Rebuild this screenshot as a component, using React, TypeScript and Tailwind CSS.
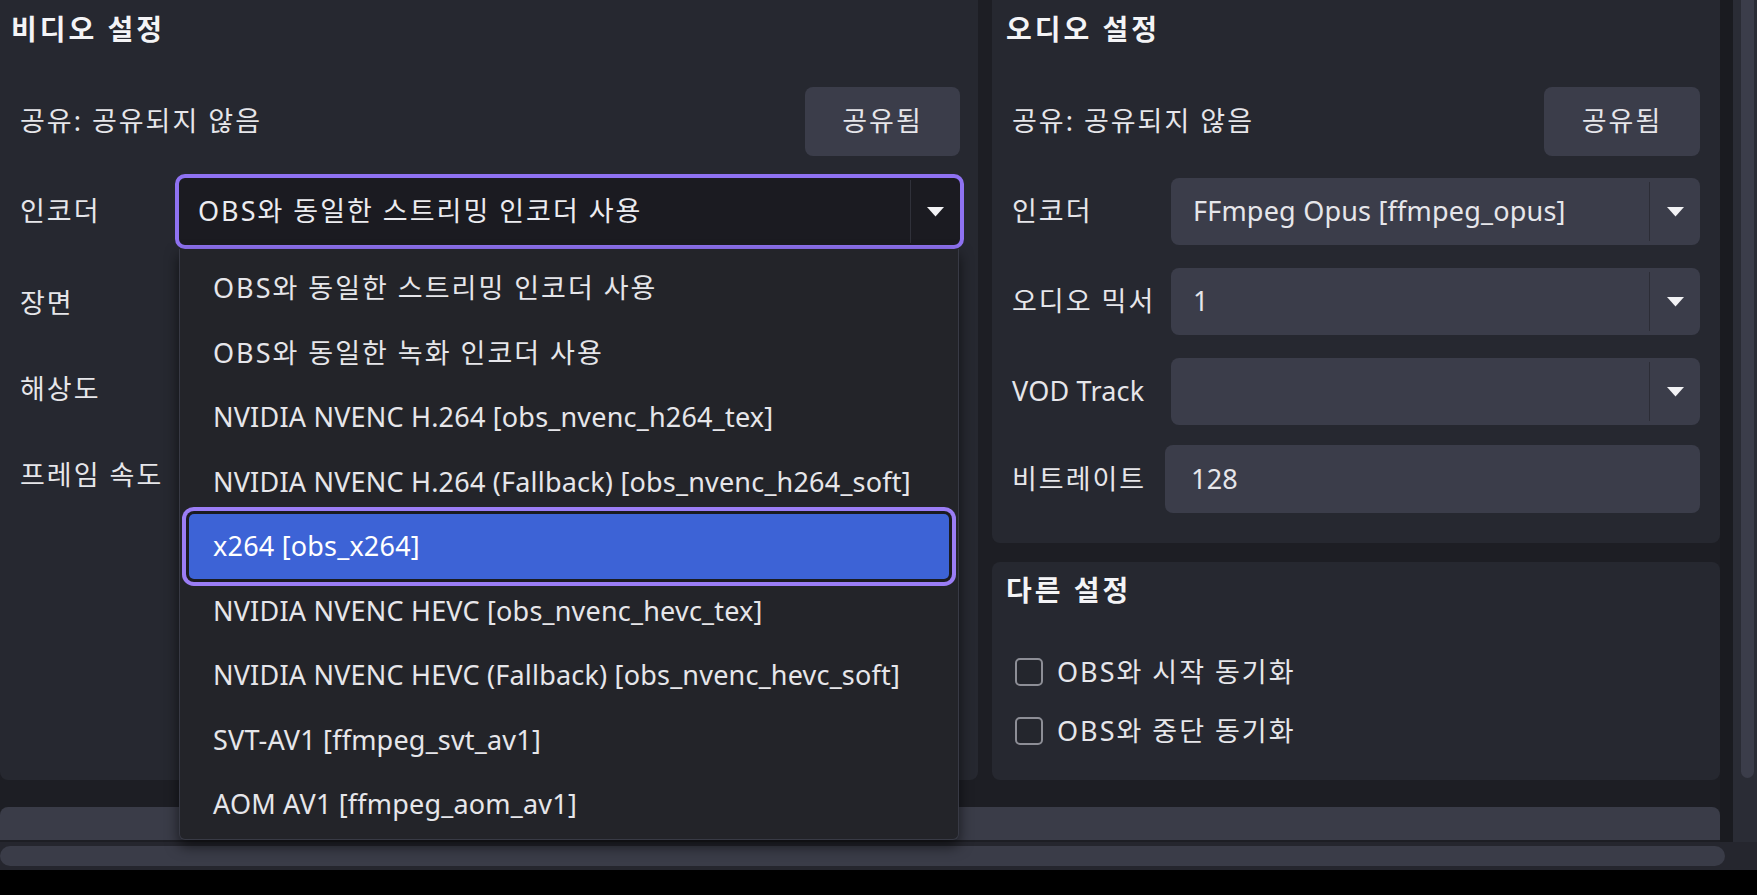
import React from "react";

const FONT = '"Noto Sans", "Noto Sans CJK KR", sans-serif';

function Arrow() {
  return (
    <svg width="17" height="10" viewBox="0 0 17 10">
      <polygon points="0,0 17,0 8.5,9.5" fill="#f2f2f5" />
    </svg>
  );
}

function Combo({ value, className = "" }: { value: string; className?: string }) {
  return (
    <div className={"flex h-[67px] items-stretch rounded-[8px] bg-[#3b3d4a] " + className}>
      <div className="flex flex-1 items-center pl-[22px] text-[27px] tracking-[0.2px] text-[#e6e6ea]">{value}</div>
      <div className="my-[4px] w-px bg-[#2c2d36]" />
      <div className="flex w-[50px] items-center justify-center">
        <Arrow />
      </div>
    </div>
  );
}

const items = [
  "OBS와 동일한 스트리밍 인코더 사용",
  "OBS와 동일한 녹화 인코더 사용",
  "NVIDIA NVENC H.264 [obs_nvenc_h264_tex]",
  "NVIDIA NVENC H.264 (Fallback) [obs_nvenc_h264_soft]",
  "x264 [obs_x264]",
  "NVIDIA NVENC HEVC [obs_nvenc_hevc_tex]",
  "NVIDIA NVENC HEVC (Fallback) [obs_nvenc_hevc_soft]",
  "SVT-AV1 [ffmpeg_svt_av1]",
  "AOM AV1 [ffmpeg_aom_av1]",
];

const KO = "text-[27px] tracking-[2px]";
const LAT = "text-[27px] tracking-[0.2px]";
const TITLE = "text-[28px] font-bold tracking-[3px] text-[#f4f4f6]";

function Checkbox({ label }: { label: string }) {
  return (
    <div className="flex h-[40px] items-center">
      <div className="h-[28px] w-[28px] rounded-[5px] border-2 border-[#8d8e96] bg-[#24262d]" />
      <span className={"ml-[14px] text-[#e6e6ea] " + KO}>{label}</span>
    </div>
  );
}

export default function App() {
  return (
    <div
      className="relative h-[895px] w-[1757px] overflow-hidden bg-black text-[#e6e6ea]"
      style={{ fontFamily: FONT }}
    >
      <div className="flex h-[870px] flex-col bg-[#1d1e24]">
        <div className="flex h-[842px]">
          <div className="flex w-[1720px] flex-col">
            <div className="flex h-[780px] gap-[14px]">
              {/* Video settings */}
              <div className="w-[978px] rounded-b-[8px] bg-[#262830]">
                <div className={"flex h-[58px] items-center pl-[11px] " + TITLE}>비디오 설정</div>
                <div className="mt-[29px] flex h-[69px] items-center justify-between pl-[20px] pr-[18px]">
                  <span className={KO}>공유: 공유되지 않음</span>
                  <div className={"flex h-[69px] w-[155px] items-center justify-center rounded-[8px] bg-[#3b3d4a] " + KO}>
                    공유됨
                  </div>
                </div>
                <div className="mt-[18px] flex h-[75px] items-center">
                  <span className={"w-[175px] pl-[20px] " + KO}>인코더</span>
                  <div className="flex h-[75px] w-[789px] items-stretch rounded-[10px] border-[4px] border-[#8f72f2] bg-[#1b1b21]">
                    <div className={"flex flex-1 items-center pl-[19px] text-[#ececf0] " + KO}>
                      OBS와 동일한 스트리밍 인코더 사용
                    </div>
                    <div className="my-[2px] w-px bg-[#30313a]" />
                    <div className="flex w-[49px] items-center justify-center">
                      <Arrow />
                    </div>
                  </div>
                </div>
                <div className={"mt-[21px] flex h-[67px] items-center pl-[20px] " + KO}>장면</div>
                <div className={"mt-[19px] flex h-[67px] items-center pl-[20px] " + KO}>해상도</div>
                <div className={"mt-[19px] flex h-[67px] items-center pl-[20px] " + KO}>프레임 속도</div>
              </div>

              {/* Right column */}
              <div className="flex flex-1 flex-col gap-[19px]">
                <div className="h-[543px] rounded-b-[8px] bg-[#262830]">
                  <div className={"flex h-[58px] items-center pl-[14px] " + TITLE}>오디오 설정</div>
                  <div className="mt-[29px] flex h-[69px] items-center justify-between pl-[20px] pr-[20px]">
                    <span className={KO}>공유: 공유되지 않음</span>
                    <div className={"flex h-[69px] w-[156px] items-center justify-center rounded-[8px] bg-[#3b3d4a] " + KO}>
                      공유됨
                    </div>
                  </div>
                  <div className="mt-[22px] grid grid-cols-[153px_1fr] items-center gap-y-[23px] pl-[20px] pr-[20px]">
                    <span className={KO}>인코더</span>
                    <Combo value="FFmpeg Opus [ffmpeg_opus]" className="ml-[6px]" />
                    <span className={"whitespace-nowrap " + KO}>오디오 믹서</span>
                    <Combo value="1" className="ml-[6px]" />
                    <span className={LAT}>VOD Track</span>
                    <Combo value="" className="ml-[6px]" />
                    <span className={"-mt-[3px] whitespace-nowrap " + KO}>비트레이트</span>
                    <div className={"-mt-[3px] flex h-[68px] items-center rounded-[8px] bg-[#3b3d4a] pl-[26px] " + LAT}>
                      128
                    </div>
                  </div>
                </div>
                <div className="flex-1 rounded-[8px] bg-[#262830]">
                  <div className={"flex h-[56px] items-center pl-[14px] " + TITLE}>다른 설정</div>
                  <div className="mt-[34px] flex flex-col gap-[19px] pl-[23px]">
                    <Checkbox label="OBS와 시작 동기화" />
                    <Checkbox label="OBS와 중단 동기화" />
                  </div>
                </div>
              </div>
            </div>
            <div className="mt-[27px] h-[33px] rounded-t-[8px] bg-[#3a3c48]" />
          </div>
          <div className="w-[13px] bg-[#1a1b20]" />
          <div className="w-[24px] bg-[#2a2c35] pl-[8px] pr-[3px]">
            <div className="h-[778px] rounded-b-full bg-[#3b3d4a]" />
          </div>
        </div>
        <div className="flex h-[28px] items-center bg-[#25262e]">
          <div className="h-[20px] w-[1725px] rounded-full bg-[#3a3c48]" />
        </div>
      </div>

      {/* Dropdown popup */}
      <div className="absolute left-[179px] top-[249px] h-[591px] w-[780px] rounded-b-[6px] border border-t-0 border-[#383a45] bg-[#232429] pt-[7px] shadow-[0_6px_14px_rgba(0,0,0,0.6)]">
        {items.map((it, i) => {
          const sel = i === 4;
          const ko = /[가-힣]/.test(it);
          const txt = ko ? KO : LAT;
          return (
            <div key={i} className="flex h-[64.5px] items-center px-[9px]">
              {sel ? (
                <div
                  className={
                    "flex h-[65px] w-full items-center rounded-[5px] bg-[#3d63d6] pl-[24px] text-white shadow-[0_0_0_3px_#1b1b21,0_0_0_7px_#9b7df5] " +
                    txt
                  }
                >
                  {it}
                </div>
              ) : (
                <div className={"pl-[24px] text-[#e6e6ea] " + txt}>{it}</div>
              )}
            </div>
          );
        })}
      </div>
    </div>
  );
}
